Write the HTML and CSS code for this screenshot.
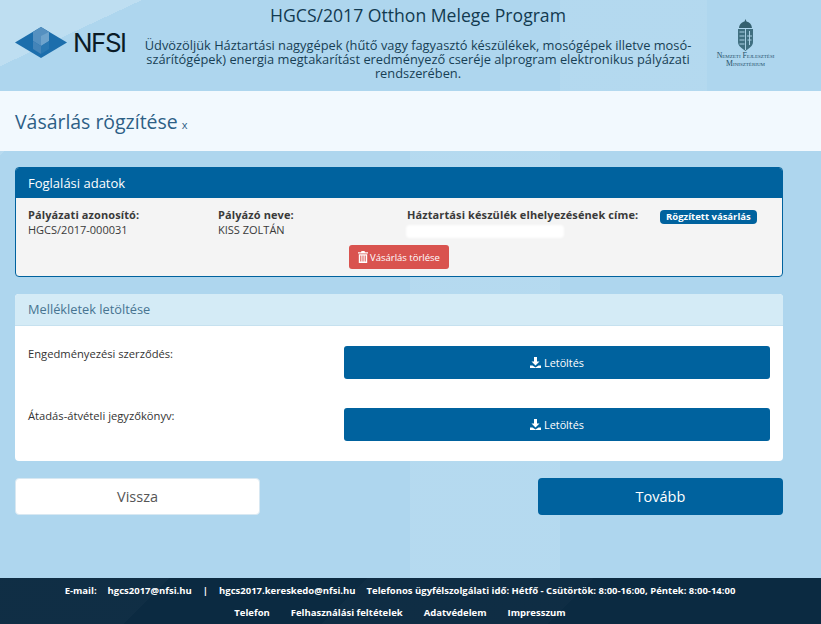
FILE: index.html
```html
<!DOCTYPE html>
<html lang="hu">
<head>
<meta charset="utf-8">
<title>Vásárlás rögzítése</title>
<link rel="stylesheet" href="styles.css">
</head>
<body>
<header class="site-header">
  <div class="logo">
    <svg class="logo-mark" width="52" height="31" viewBox="0 0 52 31" aria-hidden="true">
      <polygon points="0,15.500 26,0 52,15.500 26,31" fill="#1c6eac"/>
      <polygon points="18,5 26,0 34,5 34,14 26,19 18,14" fill="#5590c0"/>
      <polygon points="26,9 34,5 34,14 26,19" fill="#6ea3cc"/>
      <polygon points="18,14 26,19 26,27 18,22" fill="#4484b8"/>
      <polygon points="26,19 34,14 34,22 26,27" fill="#2a78b2"/>
    </svg>
    <span class="logo-text">NFSI</span>
  </div>
  <div class="intro">
    <h1 class="intro-title">HGCS/2017 Otthon Melege Program</h1>
    <p class="intro-text">Üdvözöljük Háztartási nagygépek (hűtő vagy fagyasztó készülékek, mosógépek illetve mosó-szárítógépek) energia megtakarítást eredményező cseréje alprogram elektronikus pályázati rendszerében.</p>
  </div>
  <div class="ministry">
    <svg class="arms" width="17" height="32" viewBox="0 0 17 32" aria-hidden="true">
      <path d="M8.500 0l1 2.500c3 .5 5 2.500 5.500 6.500H2C2.500 5 5 3 7.500 2.500z" fill="#34606f"/>
      <path d="M1 10h15v13c0 4-4 6.500-7.500 9C5 29.500 1 27 1 23z" fill="#3f6f80"/>
      <path d="M2.500 13h5M2.500 17h5M2.500 21h5M2.500 25h5" stroke="#a9cfe2" stroke-width="1.200"/>
      <path d="M8.500 10v21" stroke="#a9cfe2" stroke-width="1"/>
      <path d="M12.500 12v14M10 17h5M10.500 21h4" stroke="#a9cfe2" stroke-width="1"/>
    </svg>
    <div class="ministry-name">Nemzeti Fejlesztési<br>Minisztérium</div>
  </div>
</header>

<section class="title-bar">
  <h2 class="page-title">Vásárlás rögzítése</h2>
  <small class="page-title-x">x</small>
</section>

<main class="content">
  <section class="panel panel-primary">
    <h3 class="panel-heading">Foglalási adatok</h3>
    <div class="panel-body">
      <div class="info-grid">
        <div class="info-item">
          <strong class="info-label">Pályázati azonosító:</strong>
          <span class="info-value">HGCS/2017-000031</span>
        </div>
        <div class="info-item">
          <strong class="info-label">Pályázó neve:</strong>
          <span class="info-value">KISS ZOLTÁN</span>
        </div>
        <div class="info-item">
          <strong class="info-label">Háztartási készülék elhelyezésének címe:</strong>
          <span class="redacted"></span>
        </div>
        <div class="info-item">
          <span class="badge">Rögzített vásárlás</span>
        </div>
      </div>
      <div class="delete-row">
        <button class="btn-danger" type="button">
          <svg width="10" height="12" viewBox="0 0 10 12" aria-hidden="true"><path d="M3.500 0h3l.5 1.200h3V2.500H0V1.200h3zM.8 3.200h8.400V12H.8zM2.300 4.500v6h1v-6zm2.200 0v6h1v-6zm2.200 0v6h1v-6z" fill="#fff" fill-rule="evenodd"/></svg>
          Vásárlás törlése
        </button>
      </div>
    </div>
  </section>

  <section class="panel panel-info">
    <h3 class="panel-heading">Mellékletek letöltése</h3>
    <div class="panel-body downloads">
      <div class="download-row">
        <span class="download-label">Engedményezési szerződés:</span>
        <button class="btn-download" type="button">
          <svg width="11" height="11" viewBox="0 0 11 11" aria-hidden="true"><path d="M4 0h3v4.500h2.500L5.500 8.500 1.500 4.500H4zM0 8.500h2.500l3 2 3-2H11V11H0z" fill="#fff"/></svg>
          Letöltés
        </button>
      </div>
      <div class="download-row">
        <span class="download-label">Átadás-átvételi jegyzőkönyv:</span>
        <button class="btn-download" type="button">
          <svg width="11" height="11" viewBox="0 0 11 11" aria-hidden="true"><path d="M4 0h3v4.500h2.500L5.500 8.500 1.500 4.500H4zM0 8.500h2.500l3 2 3-2H11V11H0z" fill="#fff"/></svg>
          Letöltés
        </button>
      </div>
    </div>
  </section>

  <nav class="actions">
    <button class="btn-back" type="button">Vissza</button>
    <button class="btn-next" type="button">Tovább</button>
  </nav>
</main>

<footer class="site-footer">
  <div class="footer-line">
    <span>E-mail:</span>
    <span>hgcs2017@nfsi.hu</span>
    <span>|</span>
    <span>hgcs2017.kereskedo@nfsi.hu</span>
    <span>Telefonos ügyfélszolgálati idő: Hétfő - Csütörtök: 8:00-16:00, Péntek: 8:00-14:00</span>
  </div>
  <div class="footer-links">
    <a>Telefon</a>
    <a>Felhasználási feltételek</a>
    <a>Adatvédelem</a>
    <a>Impresszum</a>
  </div>
</footer>
</body>
</html>
```
FILE: styles.css
```css
* { box-sizing: border-box; }
html, body { margin: 0; padding: 0; }
body {
  width: 821px;
  height: 624px;
  overflow: hidden;
  display: flex;
  flex-direction: column;
  font-family: "Open Sans", sans-serif;
  color: #333;
  background-color: #aed6ee;
  background-image:
    linear-gradient(90deg, transparent 0 410px, rgba(255,255,255,.09) 410px 560px, transparent 560px),
    linear-gradient(135deg, rgba(255,255,255,.12) 0 110px, transparent 110px);
}
.site-header {
  height: 91px;
  flex: none;
  display: grid;
  grid-template-columns: 140px 556px 1fr;
  align-items: start;
  background-color: #aed6ee;
  background-image:
    linear-gradient(90deg, transparent 0 560px, rgba(255,255,255,.07) 560px 707px, transparent 707px),
    linear-gradient(155deg, rgba(255,255,255,.2) 0 60px, transparent 60px);
}
.logo {
  display: flex;
  align-items: center;
  padding: 27px 0 0 15px;
}
.logo-text {
  margin-left: 6px;
  font-family: "Inter", sans-serif;
  font-size: 26px;
  line-height: 31px;
  letter-spacing: -1.500px;
  color: #0a1b26;
}
.intro { text-align: center; padding-top: 3px; }
.intro-title {
  margin: 0;
  font-size: 17.600px;
  font-weight: 400;
  line-height: 24px;
  color: #123a50;
}
.intro-text {
  margin: 11px 0 0;
  font-size: 12.830px;
  line-height: 14px;
  color: #173f55;
}
.ministry {
  display: flex;
  flex-direction: column;
  align-items: center;
  padding: 19px 0 0 0;
  margin-left: -26px;
}
.ministry-name {
  margin-top: 1px;
  font-family: "Liberation Serif", serif;
  font-variant: small-caps;
  font-size: 7.800px;
  line-height: 8px;
  text-align: center;
  white-space: nowrap;
  color: #24506a;
}
.title-bar {
  height: 60px;
  flex: none;
  display: flex;
  align-items: baseline;
  gap: 4px;
  padding: 18px 0 0 15px;
  background: #f2f9fe;
}
.page-title {
  margin: 0;
  font-size: 19.440px;
  line-height: 26px;
  font-weight: 400;
  color: #2d5f86;
}
.page-title-x { font-size: 11px; color: #2d5f86; }
.content {
  flex: 1;
  padding: 16px 38px 0 15px;
  display: flex;
  flex-direction: column;
}
.panel { border-radius: 4px; overflow: hidden; }
.panel-heading {
  margin: 0;
  height: 31px;
  padding-left: 13px;
  font-size: 13px;
  line-height: 32px;
  font-weight: 400;
}
.panel-primary { border: 1px solid #00629e; height: 110px; background: #f4f4f4; }
.panel-primary .panel-heading {
  background: #00629e;
  color: #fff;
  margin: -1px -1px 0;
  padding-left: 13px;
}
.panel-primary .panel-body { padding: 9px 12px 0; }
.info-grid {
  display: grid;
  grid-template-columns: 190px 189px 253px auto;
  font-size: 11px;
  line-height: 15px;
}
.info-item { display: flex; flex-direction: column; align-items: flex-start; }
.info-label { font-weight: 700; color: #3a3a3a; letter-spacing: .1px; }
.info-value { color: #3a3a3a; }
.redacted {
  display: block;
  width: 158px;
  height: 13px;
  margin: 3px 0 0 -1px;
  background: #fff;
  border-radius: 4px;
  filter: blur(1px);
}
.badge {
  margin-top: 3px;
  padding: 0 6px;
  height: 14px;
  border-radius: 4px;
  background: #00629e;
  color: #fff;
  font-size: 9.500px;
  line-height: 14px;
  font-weight: 700;
}
.delete-row { display: flex; justify-content: center; margin-top: 7px; }
.btn-danger {
  height: 24px;
  width: 100px;
  padding: 0;
  border: 0;
  border-radius: 3px;
  background: #d9534f;
  color: #fff;
  font: 400 9.500px "Open Sans", sans-serif;
  display: flex;
  align-items: center;
  justify-content: center;
  gap: 2px;
}
.panel-info { margin-top: 17px; height: 167px; background: #fff; }
.panel-info .panel-heading {
  background: #d4ebf6;
  color: #477491;
  border-bottom: 1px solid #c6e1ef;
  height: 32px;
  font-size: 12.800px;
  line-height: 31px;
}
.downloads { padding: 20px 13px 0; display: flex; flex-direction: column; gap: 29px; }
.download-row {
  display: grid;
  grid-template-columns: 316px 1fr;
  align-items: start;
}
.download-label { font-size: 11.200px; line-height: 14px; color: #333; padding-top: 1px; }
.btn-download {
  height: 33px;
  border: 0;
  border-radius: 3px;
  background: #00629e;
  color: #fff;
  font: 400 10.800px "Open Sans", sans-serif;
  display: flex;
  align-items: center;
  justify-content: center;
  gap: 3px;
}
.actions {
  margin-top: 17px;
  display: flex;
  justify-content: space-between;
}
.btn-back, .btn-next {
  width: 245px;
  height: 37px;
  border-radius: 4px;
  font: 400 14.500px "Open Sans", sans-serif;
}
.btn-back { background: #fff; color: #555; border: 1px solid #d8e8f2; }
.btn-next { background: #00629e; color: #fff; border: 0; }
.site-footer {
  height: 46px;
  flex: none;
  background-color: #0b2a41;
  background-image:
    linear-gradient(135deg, rgba(255,255,255,.02) 0 120px, transparent 120px 260px, rgba(255,255,255,.015) 260px 420px, transparent 420px);
  color: #fff;
  font-size: 9.500px;
  font-weight: 700;
  line-height: 14px;
  padding: 6px 21px 0 0;
}
.footer-line { display: flex; justify-content: center; gap: 11px; }
.footer-links { display: flex; justify-content: center; gap: 21px; margin-top: 8px; }
```
